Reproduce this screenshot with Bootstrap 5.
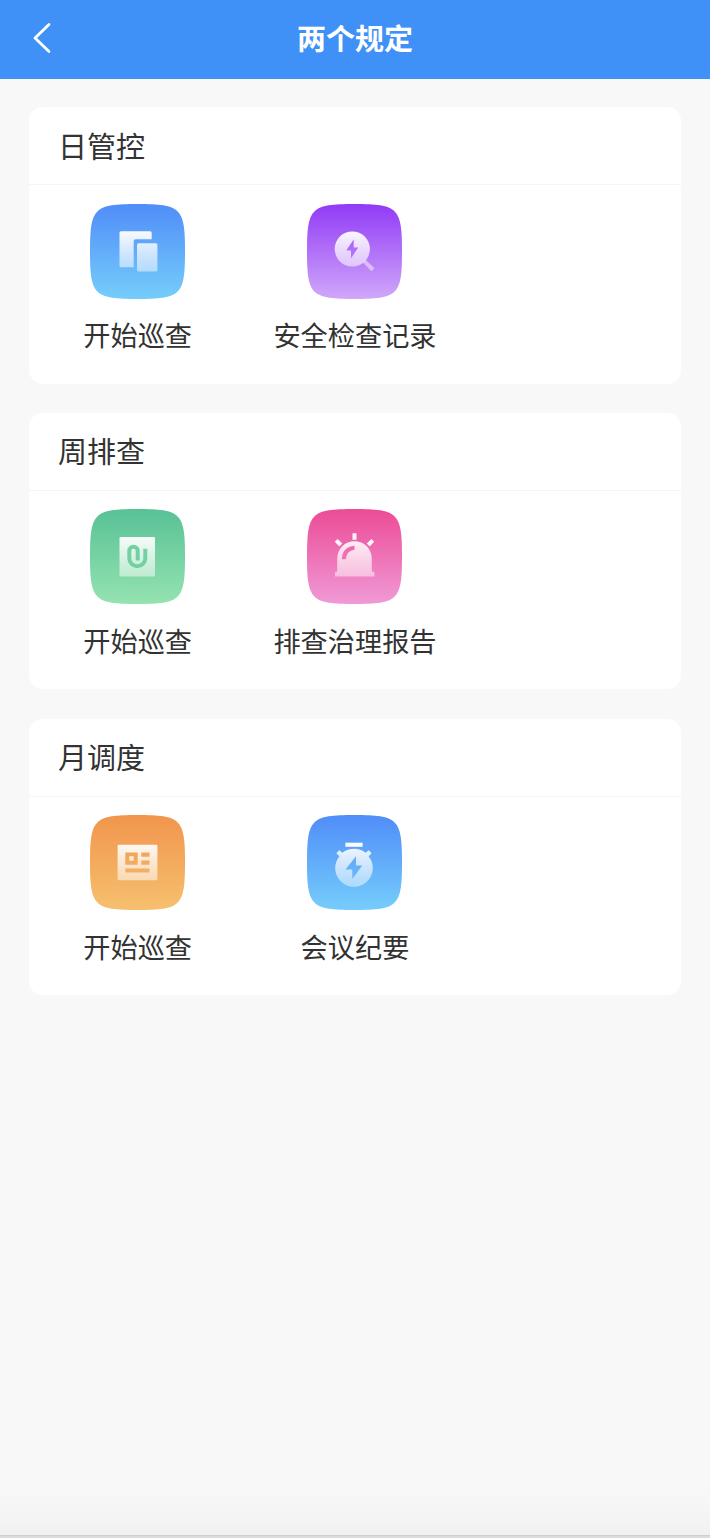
<!DOCTYPE html>
<html lang="zh-CN">
<head>
<meta charset="utf-8">
<meta name="viewport" content="width=device-width, initial-scale=1">
<title>两个规定</title>
<link href="https://cdn.jsdelivr.net/npm/bootstrap@5.3.0/dist/css/bootstrap.min.css" rel="stylesheet">
<style>
  body { background: #f8f8f8; color: #323232; font-family: "Noto Sans CJK SC", sans-serif; }
  .page { min-height: 1538px; }
  .topbar { height: 79px; padding-bottom: 3px; background: #3f90f7; }
  .topbar h1 { font-size: 29px; line-height: 40px; padding-bottom: 3px; }
  .side { width: 84px; }
  .content { padding: 28px 29px 0; gap: 29.3px; }
  .panel { height: 276.5px; border-radius: 14px; }
  .panel-title { height: 78px; padding: 0 0 2px 29px; font-size: 29px; line-height: 40px; border-bottom: 1px solid #f5f5f5; }
  .entry { padding-top: 18.7px; color: inherit; }
  .entry svg { width: 95px; height: 95px; }
  .entry span { font-size: 27.2px; line-height: 40px; margin-top: 15.3px; }
  .bottom-shade { height: 45px; background: linear-gradient(#f8f8f8, #f1f1f2); }
  .bottom-edge { height: 3px; background: #dcddd6; border-top: 1px solid #cfd0cc; }
</style>
</head>
<body>
<svg width="0" height="0" class="position-absolute" aria-hidden="true">
  <defs>
    <linearGradient id="blue" x2="0" y2="1"><stop stop-color="#508df9"/><stop offset="1" stop-color="#75cdfb"/></linearGradient>
    <linearGradient id="purple" x2="0" y2="1"><stop stop-color="#913af6"/><stop offset="1" stop-color="#d0a8fa"/></linearGradient>
    <linearGradient id="green" x2="0" y2="1"><stop stop-color="#58c196"/><stop offset="1" stop-color="#95e3b0"/></linearGradient>
    <linearGradient id="pink" x2="0" y2="1"><stop stop-color="#ec4b96"/><stop offset="1" stop-color="#f09ad6"/></linearGradient>
    <linearGradient id="orange" x2="0" y2="1"><stop stop-color="#f1954d"/><stop offset="1" stop-color="#f6c06e"/></linearGradient>
    <linearGradient id="glyph" gradientUnits="userSpaceOnUse" x1="0" y1="27" x2="0" y2="68"><stop stop-color="#fff" stop-opacity=".96"/><stop offset="1" stop-color="#fff" stop-opacity=".48"/></linearGradient>
    <path id="tile" d="M0 47.5C0 4 4 0 47.5 0S95 4 95 47.5 91 95 47.5 95 0 91 0 47.5Z"/>
  </defs>
</svg>
<div class="page d-flex flex-column">
  <header class="topbar d-flex align-items-center text-white">
    <a href="#" class="side text-white d-flex justify-content-center" aria-label="返回">
      <svg width="20" height="32" viewBox="0 0 20 32" fill="none" stroke="currentColor" stroke-width="2.8" stroke-linecap="round" stroke-linejoin="round"><path d="M17 2.5 3 16 17 29.5"/></svg>
    </a>
    <h1 class="flex-grow-1 text-center fw-bold m-0">两个规定</h1>
    <div class="side"></div>
  </header>
  <main class="content d-flex flex-column flex-grow-1">
    <section class="panel bg-white">
      <h2 class="panel-title d-flex align-items-center fw-normal m-0">日管控</h2>
      <div class="row g-0">
        <a href="#" class="entry col-4 d-flex flex-column align-items-center text-decoration-none">
          <svg viewBox="0 0 95 95"><use href="#tile" fill="url(#blue)"/>
            <path fill="url(#glyph)" d="M31 27.3H60.2Q61.7 27.3 61.7 28.8V35.3H45.7Q43.7 35.3 43.7 37.3V63.3H31Q29.5 63.3 29.5 61.8V28.8Q29.5 27.3 31 27.3Z"/>
            <rect x="47" y="39.2" width="20.4" height="28.3" rx="1.5" fill="url(#glyph)"/></svg>
          <span>开始巡查</span>
        </a>
        <a href="#" class="entry col-4 d-flex flex-column align-items-center text-decoration-none">
          <svg viewBox="0 0 95 95"><use href="#tile" fill="url(#purple)"/>
            <path fill="url(#glyph)" fill-rule="evenodd" d="M45.3 27.4a17.6 17.6 0 1 0 0 35.2 17.6 17.6 0 1 0 0-35.2ZM46.7 35.5V43.5H51.2L44 54.5V46.5H39.2Z"/>
            <path fill="#fff" fill-opacity=".48" d="m59 56 8.4 8.3-2.9 3-8.7-8.7Z"/></svg>
          <span>安全检查记录</span>
        </a>
      </div>
    </section>
    <section class="panel bg-white">
      <h2 class="panel-title d-flex align-items-center fw-normal m-0">周排查</h2>
      <div class="row g-0">
        <a href="#" class="entry col-4 d-flex flex-column align-items-center text-decoration-none">
          <svg viewBox="0 0 95 95"><use href="#tile" fill="url(#green)"/>
            <rect x="29.5" y="28" width="35.5" height="39.5" rx="1.2" fill="url(#glyph)"/>
            <path fill="none" stroke="#73d1a1" stroke-width="4" d="M55.3 39.8V49.3a8 8 0 0 1-16 0V42a4.2 4.2 0 0 1 8.4 0V51.5"/></svg>
          <span>开始巡查</span>
        </a>
        <a href="#" class="entry col-4 d-flex flex-column align-items-center text-decoration-none">
          <svg viewBox="0 0 95 95"><use href="#tile" fill="url(#pink)"/>
            <path fill="url(#glyph)" fill-rule="evenodd" d="M30.2 62.7V49.5a17.3 17.3 0 0 1 34.6 0V62.7H66.4Q67.4 62.7 67.4 63.7V67.5H28V63.7Q28 62.7 29 62.7ZM34.8 50.3H38.8Q39.5 41.5 47.5 40.7V36.7Q35.3 37.7 34.8 50.3Z"/>
            <path stroke="#fff" stroke-opacity=".94" stroke-width="4" d="M47.5 24.2V30.8M29.2 31.3 33.8 36M65.8 31.3 61.2 36"/></svg>
          <span>排查治理报告</span>
        </a>
      </div>
    </section>
    <section class="panel bg-white">
      <h2 class="panel-title d-flex align-items-center fw-normal m-0">月调度</h2>
      <div class="row g-0">
        <a href="#" class="entry col-4 d-flex flex-column align-items-center text-decoration-none">
          <svg viewBox="0 0 95 95"><use href="#tile" fill="url(#orange)"/>
            <path fill="url(#glyph)" fill-rule="evenodd" d="M29 29.7H66Q67.4 29.7 67.4 31V64Q67.4 65.3 66 65.3H29Q27.6 65.3 27.6 64V31Q27.6 29.7 29 29.7ZM35.3 37.5V49.8H47.7V37.5ZM39.3 41.3H43.7V45.7H39.3ZM51.3 37.5V41.8H59.5V37.5ZM51.3 45.5V49.8H59.5V45.5ZM35.3 53.5V57.6H59.5V53.5Z"/></svg>
          <span>开始巡查</span>
        </a>
        <a href="#" class="entry col-4 d-flex flex-column align-items-center text-decoration-none">
          <svg viewBox="0 0 95 95"><use href="#tile" fill="url(#blue)"/>
            <path fill="#fff" fill-opacity=".97" d="M38.4 27.7H55.6V31.8H38.4Z"/>
            <path fill="url(#glyph)" fill-rule="evenodd" d="M29.3 38.2 32.3 35.2 35.3 37.7A19 19 0 0 1 58.7 37.7L61.7 35.2 64.7 38.2 61.6 41.2A18.8 18.8 0 1 1 32.4 41.2ZM49 41.3 38.5 54.5H45.3V64L55.3 50.5H49Z"/></svg>
          <span>会议纪要</span>
        </a>
      </div>
    </section>
  </main>
  <div class="bottom-shade"></div>
  <div class="bottom-edge"></div>
</div>
<script src="https://cdn.jsdelivr.net/npm/bootstrap@5.3.0/dist/js/bootstrap.bundle.min.js"></script>
</body>
</html>
